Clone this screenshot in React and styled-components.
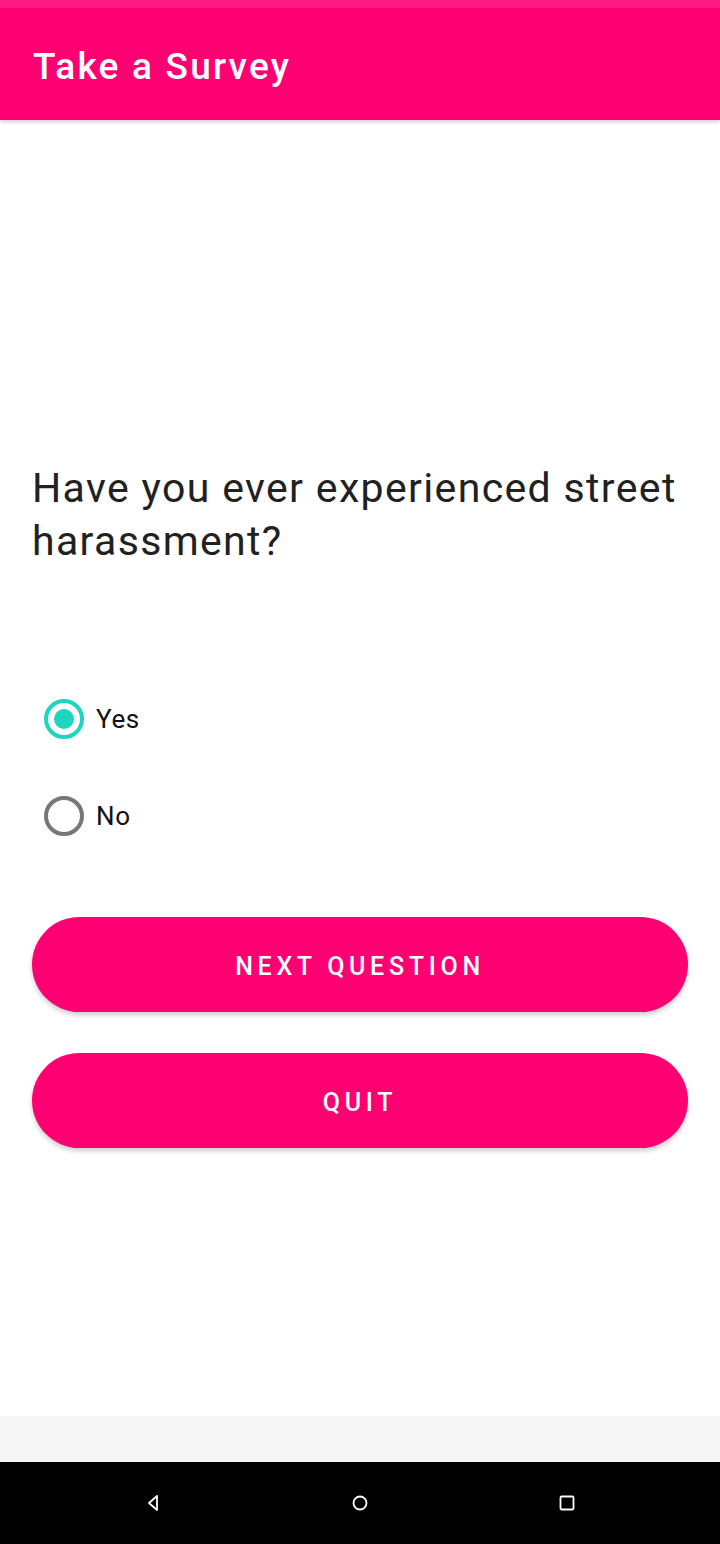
import React, { useState } from "react";
import styled, { createGlobalStyle } from "styled-components";

const GlobalStyle = createGlobalStyle`
  html, body {
    margin: 0;
    padding: 0;
    background: #ffffff;
    font-family: Roboto, "Noto Sans", sans-serif;
  }
`;

const Screen = styled.div`
  width: 720px;
  height: 1544px;
  display: flex;
  flex-direction: column;
  background: #ffffff;
  overflow: hidden;
`;

const StatusBar = styled.div`
  height: 8px;
  background: #ff1a80;
`;

const AppBar = styled.header`
  height: 112px;
  background: #ff0073;
  display: flex;
  align-items: center;
  padding: 4px 33px 0;
  box-sizing: border-box;
  box-shadow: 0 2px 4px rgba(0, 0, 0, 0.18);
  position: relative;
  z-index: 1;
`;

const Title = styled.h1`
  margin: 0;
  color: #ffffff;
  font-size: 37px;
  font-weight: 500;
  letter-spacing: 2.2px;
`;

const Content = styled.main`
  flex: 1;
  display: flex;
  flex-direction: column;
  padding: 342px 32px 0;
`;

const Question = styled.p`
  margin: 0;
  color: #212121;
  font-size: 41px;
  line-height: 53px;
  font-weight: 400;
  letter-spacing: 1.35px;
`;

const Options = styled.div`
  display: flex;
  flex-direction: column;
  margin-top: 126px;
  gap: 48px;
`;

const Option = styled.label`
  display: flex;
  align-items: center;
  gap: 12px;
  height: 49px;
  padding-left: 12px;
  cursor: pointer;
  font-size: 26px;
  letter-spacing: 0.6px;
  color: #111111;
`;

const Radio = styled.span`
  width: 40px;
  height: 40px;
  box-sizing: border-box;
  border-radius: 50%;
  border: 4px solid ${(p) => (p.checked ? "#1dd6c0" : "#777777")};
  display: flex;
  align-items: center;
  justify-content: center;

  &::after {
    content: "";
    width: 20px;
    height: 20px;
    border-radius: 50%;
    background: ${(p) => (p.checked ? "#1dd6c0" : "transparent")};
  }
`;

const Buttons = styled.div`
  display: flex;
  flex-direction: column;
  gap: 41px;
  margin-top: 77px;
`;

const PillButton = styled.button`
  height: 95px;
  padding: 4px 0 0;
  border: none;
  border-radius: 48px;
  background: #ff0073;
  color: #ffffff;
  font-family: Roboto, "Noto Sans", sans-serif;
  font-size: 25px;
  font-weight: 500;
  letter-spacing: 4.7px;
  text-transform: uppercase;
  box-shadow: 0 3px 5px rgba(0, 0, 0, 0.2);
  cursor: pointer;
`;

const BottomStrip = styled.div`
  height: 46px;
  background: #f7f7f7;
`;

const NavBar = styled.nav`
  height: 82px;
  background: #000000;
  display: grid;
  grid-template-columns: repeat(3, 1fr);
  align-items: center;
  justify-items: center;
  padding: 0 50px;
`;

const NavIcon = styled.svg`
  width: 22px;
  height: 22px;
`;

const options = ["Yes", "No"];

export default function App() {
  const [answer, setAnswer] = useState("Yes");

  return (
    <Screen>
      <GlobalStyle />
      <StatusBar />
      <AppBar>
        <Title>Take a Survey</Title>
      </AppBar>
      <Content>
        <Question>Have you ever experienced street harassment?</Question>
        <Options>
          {options.map((o) => (
            <Option key={o} onClick={() => setAnswer(o)}>
              <Radio checked={answer === o} />
              {o}
            </Option>
          ))}
        </Options>
        <Buttons>
          <PillButton>Next Question</PillButton>
          <PillButton>Quit</PillButton>
        </Buttons>
      </Content>
      <BottomStrip />
      <NavBar>
        <NavIcon viewBox="0 0 22 22">
          <path d="M15 4 L7 11 L15 18 Z" fill="none" stroke="#fff" strokeWidth="1.8" strokeLinejoin="round" />
        </NavIcon>
        <NavIcon viewBox="0 0 22 22">
          <circle cx="11" cy="11" r="6.5" fill="none" stroke="#fff" strokeWidth="1.8" />
        </NavIcon>
        <NavIcon viewBox="0 0 22 22">
          <rect x="4.5" y="4.5" width="13" height="13" rx="1.2" fill="none" stroke="#fff" strokeWidth="1.8" />
        </NavIcon>
      </NavBar>
    </Screen>
  );
}
